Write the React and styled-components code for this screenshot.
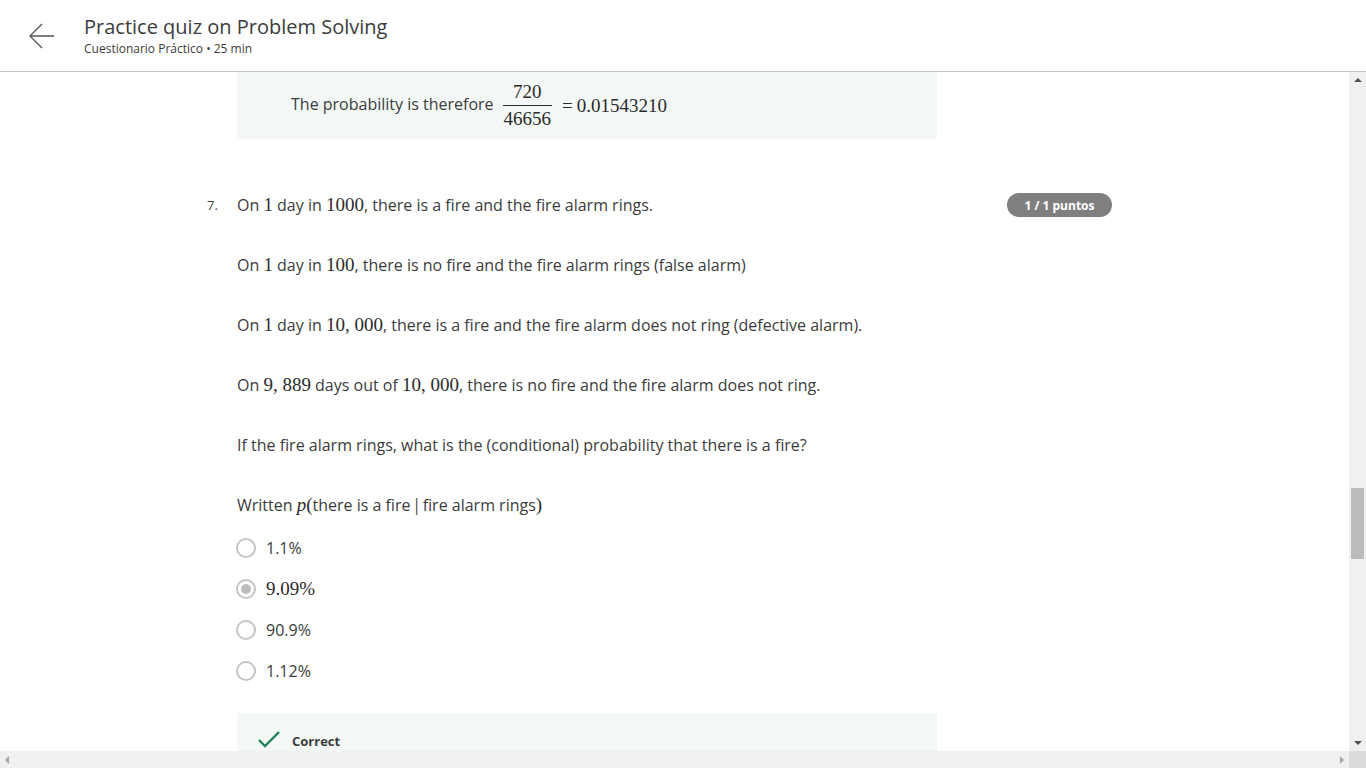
import React from 'react';
import styled, { createGlobalStyle } from 'styled-components';

const GlobalStyle = createGlobalStyle`
    html, body {
        margin: 0;
        padding: 0;
        background: #fff;
    }
    body {
        font-family: "Open Sans", "Noto Sans", sans-serif;
        color: #373a3c;
    }
`;

const Page = styled.div`
    width: 100vw;
    height: 100vh;
    display: grid;
    grid-template-rows: 72px 1fr 17px;
    overflow: hidden;
`;

const Header = styled.header`
    display: flex;
    align-items: center;
    box-sizing: border-box;
    border-bottom: 1px solid #c6c6c6;
    padding-left: 29px;
    gap: 29px;
`;

const BackButton = styled.button`
    border: none;
    background: none;
    padding: 0;
    width: 26px;
    height: 26px;
    display: flex;
    align-items: center;
    justify-content: center;
    cursor: pointer;
    margin-top: 1px;
`;

const TitleBlock = styled.div`
    display: flex;
    flex-direction: column;
    margin-top: -2px;
`;

const Title = styled.h1`
    margin: 0;
    font-size: 20px;
    font-weight: 400;
    line-height: 28px;
    color: #3c3c3c;
`;

const Subtitle = styled.div`
    font-size: 12px;
    line-height: 15px;
    color: #3c3c3c;
`;

const Middle = styled.div`
    display: grid;
    grid-template-columns: 1fr 17px;
    min-height: 0;
`;

const Content = styled.main`
    overflow: hidden;
    padding-left: 207px;
`;

const Feedback = styled.div`
    width: 700px;
    margin-left: 30px;
    background: #f3f8f7;
    box-sizing: border-box;
    padding-left: ${p => p.$indent}px;
    height: ${p => p.$height}px;
    display: flex;
    align-items: ${p => p.$align};
    padding-top: ${p => p.$top || 0}px;
    gap: ${p => p.$gap}px;
`;

const FeedbackText = styled.span`
    font-size: 16px;
    color: #3c3c3c;
    margin-top: -3px;
`;

const MathGroup = styled.span`
    display: inline-flex;
    align-items: center;
`;

const Math = styled.span`
    font-family: "Liberation Serif", "DejaVu Serif", serif;
    font-size: 19px;
    font-style: ${p => (p.$italic ? 'italic' : 'normal')};
    color: #2b2b2b;
`;

const Relation = styled(Math)`
    margin-right: 4px;
`;

const Fraction = styled.span`
    display: inline-flex;
    flex-direction: column;
    align-items: center;
    font-family: "Liberation Serif", "DejaVu Serif", serif;
    font-size: 19px;
    line-height: 22px;
    color: #2b2b2b;
    margin-left: -2px;
    margin-right: 9px;
    padding: 0 1px;
`;

const Denominator = styled.span`
    border-top: 1px solid #2b2b2b;
    padding: 2px 1px 0;
    margin-top: 2px;
`;

const Question = styled.section`
    display: grid;
    grid-template-columns: 30px 770px 105px;
    margin-top: 54px;
`;

const Number = styled.div`
    font-size: 13px;
    line-height: 24px;
    color: #3c3c3c;
`;

const Body = styled.div`
    display: flex;
    flex-direction: column;
`;

const Paragraph = styled.p`
    margin: 0 0 36px;
    font-size: 16px;
    line-height: 24px;
    color: #3c3c3c;
    white-space: nowrap;
    &:last-of-type {
        margin-bottom: 10px;
    }
`;

const Badge = styled.div`
    height: 24px;
    border-radius: 12px;
    background: #7f7f7f;
    color: #fff;
    font-size: 12px;
    font-weight: 700;
    display: flex;
    align-items: center;
    justify-content: center;
`;

const Options = styled.div`
    display: flex;
    flex-direction: column;
`;

const Option = styled.label`
    height: 41px;
    display: flex;
    align-items: center;
    gap: 10px;
    font-size: 16px;
    color: #3c3c3c;
`;

const Radio = styled.span`
    width: 20px;
    height: 20px;
    box-sizing: border-box;
    border-radius: 50%;
    border: 2px solid #c4c4c4;
    display: flex;
    align-items: center;
    justify-content: center;
    margin-left: -1px;
    &::after {
        content: '';
        width: 10px;
        height: 10px;
        border-radius: 50%;
        background: ${p => (p.$checked ? '#bdbdbd' : 'transparent')};
    }
`;

const CorrectLabel = styled.span`
    font-size: 13px;
    font-weight: 700;
    color: #3c3c3c;
    line-height: 22px;
`;

const VScroll = styled.div`
    background: #f0f0f0;
    display: flex;
    flex-direction: column;
    align-items: center;
    justify-content: space-between;
    padding: 6px 0;
    box-sizing: border-box;
    position: relative;
`;

const Thumb = styled.div`
    position: absolute;
    left: 2px;
    top: 416px;
    width: 13px;
    height: 71px;
    background: #bcbcbc;
`;

const HScroll = styled.div`
    display: grid;
    grid-template-columns: 1fr 17px;
    background: #f0f0f0;
`;

const HTrack = styled.div`
    display: flex;
    align-items: center;
    justify-content: space-between;
    padding: 0 5px;
`;

const Corner = styled.div`
    background: #dcdcdc;
`;

const Arrow = ({ dir, color }) => {
    const shapes = {
        up: '0,4 4,0 8,4',
        down: '0,0 8,0 4,4',
        left: '4,0 4,8 0,4',
        right: '0,0 0,8 4,4',
    };
    const vertical = dir === 'up' || dir === 'down';
    return (
        <svg width={vertical ? 8 : 4} height={vertical ? 4 : 8} viewBox={vertical ? '0 0 8 4' : '0 0 4 8'}>
            <polygon points={shapes[dir]} fill={color} />
        </svg>
    );
};

const options = [
    { label: '1.1%' },
    { label: '9.09%', math: true, checked: true },
    { label: '90.9%' },
    { label: '1.12%' },
];

const App = () => {
    return (
        <>
            <GlobalStyle />
            <Page>
                <Header>
                    <BackButton aria-label="Back">
                        <svg width="26" height="26" viewBox="0 0 26 26" fill="none" stroke="#555" strokeWidth="1.3">
                            <path d="M25 13H1M13 1L1 13L13 25" />
                        </svg>
                    </BackButton>
                    <TitleBlock>
                        <Title>Practice quiz on Problem Solving</Title>
                        <Subtitle>Cuestionario Práctico • 25 min</Subtitle>
                    </TitleBlock>
                </Header>
                <Middle>
                    <Content>
                        <Feedback $indent={54} $height={67} $align="center" $gap={10}>
                            <FeedbackText>The probability is therefore</FeedbackText>
                            <MathGroup>
                                <Fraction>
                                    <span>720</span>
                                    <Denominator>46656</Denominator>
                                </Fraction>
                                <Relation>=</Relation>
                                <Math>0.01543210</Math>
                            </MathGroup>
                        </Feedback>
                        <Question>
                            <Number>7.</Number>
                            <Body>
                                <Paragraph>On <Math>1</Math> day in <Math>1000</Math>, there is a fire and the fire alarm rings.</Paragraph>
                                <Paragraph>On <Math>1</Math> day in <Math>100</Math>, there is no fire and the fire alarm rings (false alarm)</Paragraph>
                                <Paragraph>On <Math>1</Math> day in <Math>10, 000</Math>, there is a fire and the fire alarm does not ring (defective alarm).</Paragraph>
                                <Paragraph>On <Math>9, 889</Math> days out of <Math>10, 000</Math>, there is no fire and the fire alarm does not ring.</Paragraph>
                                <Paragraph>If the fire alarm rings, what is the (conditional) probability that there is a fire?</Paragraph>
                                <Paragraph>Written <Math $italic>p</Math><Math>(</Math>there is a fire <Math>|</Math> fire alarm rings<Math>)</Math></Paragraph>
                                <Options>
                                    {options.map(o => (
                                        <Option key={o.label}>
                                            <Radio $checked={o.checked} />
                                            {o.math ? <Math>{o.label}</Math> : o.label}
                                        </Option>
                                    ))}
                                </Options>
                            </Body>
                            <Badge>1 / 1 puntos</Badge>
                        </Question>
                        <div style={{ height: 22 }} />
                        <Feedback $indent={21} $height={60} $align="flex-start" $top={17} $gap={12}>
                            <svg width="22" height="18" viewBox="0 0 22 18" fill="none" stroke="#1f8354" strokeWidth="2.4">
                                <path d="M1 10L7 16L21 2" />
                            </svg>
                            <CorrectLabel>Correct</CorrectLabel>
                        </Feedback>
                    </Content>
                    <VScroll>
                        <Arrow dir="up" color="#505050" />
                        <Thumb />
                        <Arrow dir="down" color="#505050" />
                    </VScroll>
                </Middle>
                <HScroll>
                    <HTrack>
                        <Arrow dir="left" color="#a3a3a3" />
                        <Arrow dir="right" color="#a3a3a3" />
                    </HTrack>
                    <Corner />
                </HScroll>
            </Page>
        </>
    );
};

export default App;
